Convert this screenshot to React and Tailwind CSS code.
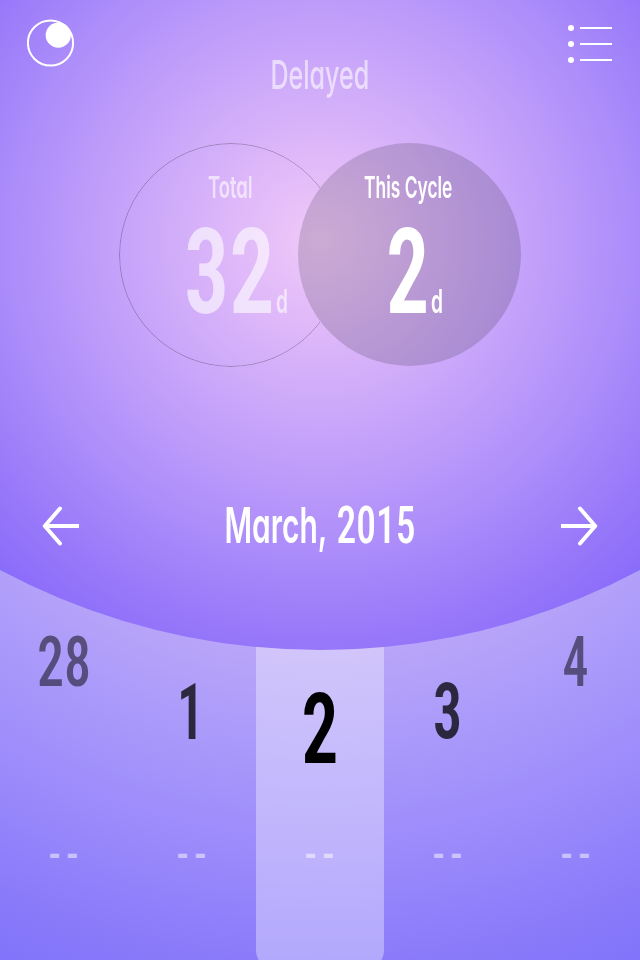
import { useLayoutEffect, useRef, useState } from 'react'

const days = [
  { day: '28', width: 54, number: 'pt-[62px] text-[70px] font-medium text-black/50' },
  { day: '1', width: 27, number: 'pt-[113px] pr-[2px] text-[78px] font-semibold text-black/75' },
  { day: '2', width: 37, number: 'pt-[129px] text-[99px] font-semibold text-black', active: true },
  { day: '3', width: 29, number: 'pt-[112px] text-[78px] font-semibold text-black/75' },
  { day: '4', width: 26, number: 'pt-[62px] pr-[1px] text-[70px] font-medium text-black/50' },
]

// Squeezes a line of text horizontally so that it takes exactly `width` pixels
function Condensed({ width, className = '', children }) {
  const ref = useRef(null)
  const [scale, setScale] = useState(0.6)

  useLayoutEffect(() => {
    setScale(width / ref.current.offsetWidth)
  }, [width, children])

  return (
    <span className={`flex justify-center whitespace-nowrap ${className}`} style={{ width }}>
      <span ref={ref} className="shrink-0" style={{ transform: `scaleX(${scale})` }}>
        {children}
      </span>
    </span>
  )
}

function Logo() {
  return (
    <svg width="48" height="48" viewBox="0 0 48 48">
      <circle cx="23.5" cy="24" r="22.6" fill="none" stroke="white" strokeWidth="2" />
      <circle cx="31.3" cy="16.2" r="12.6" fill="white" />
    </svg>
  )
}

function MenuIcon() {
  return (
    <svg width="44" height="40" viewBox="0 0 44 40" fill="white">
      {[4, 20, 36].map((y) => (
        <g key={y}>
          <circle cx="3" cy={y} r="3" />
          <rect x="12" y={y - 1} width="32" height="2" />
        </g>
      ))}
    </svg>
  )
}

function Arrow({ className = '' }) {
  return (
    <svg width="37" height="40" viewBox="0 0 37 40" fill="none" stroke="white" strokeWidth="4" className={className}>
      <path d="M18 2.5L2.8 20L18 37.5" strokeLinecap="round" strokeLinejoin="round" />
      <path d="M3 20H37" />
    </svg>
  )
}

function Counter({ label, labelWidth, value, valueWidth, className = '' }) {
  return (
    <div className={`flex flex-col items-center ${className}`}>
      <Condensed width={labelWidth} className="text-[30px] leading-[30px] font-semibold">
        {label}
      </Condensed>
      <div className="mt-[26px] ml-[12px] flex h-[86px] items-end gap-[1px]">
        <Condensed width={valueWidth} className="font-['Roboto_Condensed'] text-[118px] leading-[82px] font-semibold">
          {value}
        </Condensed>
        <Condensed width={12} className="text-[32px] leading-[24px] font-semibold">
          d
        </Condensed>
      </div>
    </div>
  )
}

export default function App() {
  return (
    <div className="h-[960px] w-[640px] overflow-hidden bg-[radial-gradient(circle_at_320px_240px,#c4b0f8_350px,#b9a6f9_410px,#a898fa_520px,#9c8bfb_611px,#8b7bfa_720px,#8074fa_787px)] font-['Inter',sans-serif] [font-feature-settings:'cv11']">
      <header className="h-[650px] bg-[radial-gradient(circle_at_320px_240px,#f0c9f8_0px,#dcb6f9_100px,#c5a3fa_200px,#ac8dfa_310px,#9878f9_400px,#876afb_470px)] text-white [clip-path:circle(680px_at_320px_-30px)]">
        <div className="grid h-[95px] grid-cols-[1fr_auto_1fr] pr-7 pl-[27px]">
          <div className="pt-[19px]">
            <Logo />
          </div>
          <Condensed width={99} className="self-end text-[40px] leading-[41px] font-medium text-white/60">
            Delayed
          </Condensed>
          <div className="flex justify-end pt-6">
            <MenuIcon />
          </div>
        </div>

        <div className="mt-12 flex justify-center">
          <div className="relative size-[224px]">
            <div className="absolute inset-0 rounded-full border border-black/25 [mask-image:radial-gradient(circle_at_290px_112px,transparent_111px,black_112px)]" />
            <Counter label="Total" labelWidth={45} value="32" valueWidth={91} className="pt-[29px] pr-[2px] text-white/60" />
          </div>
          <div className="-ml-[45px] size-[223px] rounded-full bg-black/15">
            <Counter label="This Cycle" labelWidth={88} value="2" valueWidth={43} className="pt-[29px] pr-[2px]" />
          </div>
        </div>

        <div className="mt-[128px] flex items-center justify-between px-[42px]">
          <Arrow />
          <div className="flex items-start gap-[10px] leading-[60px]">
            <Condensed width={103} className="text-[50px] font-semibold">
              March,
            </Condensed>
            <Condensed width={79} className="pt-[1px] pr-[1px] font-['Roboto_Condensed'] text-[51px] font-medium">
              2015
            </Condensed>
          </div>
          <Arrow className="rotate-180" />
        </div>
      </header>

      <main className="-mt-[80px] grid h-[400px] grid-cols-5 [clip-path:path('M0_0A680_680_0_0_0_640_0V400H0Z')]">
        {days.map(({ day, width, number, active }) => (
          <div key={day} className={`flex flex-col items-center ${active ? 'rounded-b-[20px] bg-white/35' : ''}`}>
            <div className={`h-[271px] font-['Roboto_Condensed'] leading-[60px] ${number}`}>
              <Condensed width={width}>{day}</Condensed>
            </div>
            <span className="pl-[5px] font-['Liberation_Sans'] text-[35px] leading-[24px] font-bold tracking-[6px] text-white/50">
              --
            </span>
          </div>
        ))}
      </main>
    </div>
  )
}
